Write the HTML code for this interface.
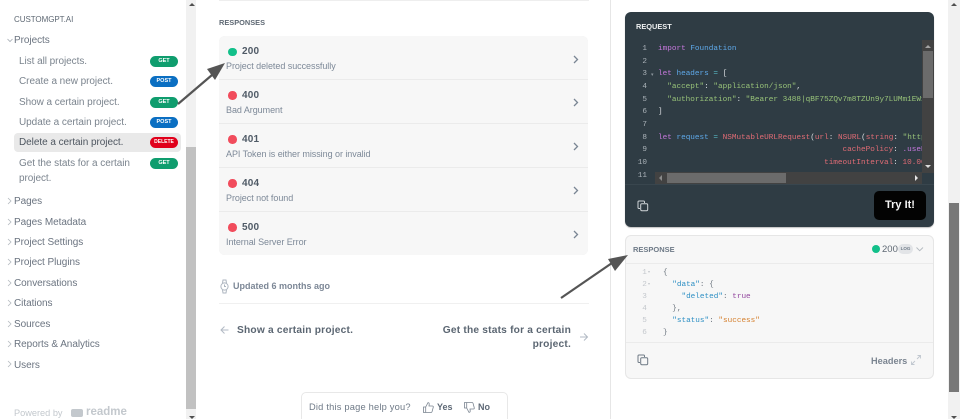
<!DOCTYPE html>
<html><head><meta charset="utf-8"><style>
html,body{margin:0;padding:0;background:#fff;width:960px;height:419px;overflow:hidden}
#w{width:960px;height:419px;position:relative;overflow:hidden;font-family:"Liberation Sans",sans-serif;filter:blur(.3px);background:#fff}
.a{position:absolute;white-space:nowrap}
.nav{font-size:10px;color:#6b7480;letter-spacing:-.05px;line-height:14px}
.sub{left:19px;color:#7b848e}
.top{left:14px}
.b{position:absolute;left:150px;width:28px;height:11px;border-radius:6px;color:#fff;font-size:5.5px;font-weight:bold;line-height:11px;text-align:center}
.g{background:#0f9d6e}.p{background:#0b6fc2}.r{background:#e0001b}
.row{position:absolute;left:219px;width:369px;height:43px;background:#f7f7f7;border-bottom:1px solid #ebebeb}
.dot{position:absolute;left:9px;top:11px;width:8.500px;height:8.500px;border-radius:50%;background:#f14c5c}
.code{position:absolute;left:23px;top:9.5px;font-size:10px;font-weight:bold;color:#4f5a66;letter-spacing:.2px;line-height:12px}
.desc{position:absolute;left:7px;top:24px;font-size:9px;color:#7d8998;letter-spacing:-.05px;line-height:12px;white-space:nowrap}
.m{font-family:"Liberation Mono",monospace;font-size:7.7px;line-height:12.65px;white-space:pre;position:absolute}
svg{position:absolute;overflow:visible}
</style></head><body><div id="w">

<div class="a" style="left:14px;top:13px;font-size:8px;color:#5f6974;letter-spacing:-.05px;line-height:14px">CUSTOMGPT.AI</div>
<svg style="left:7px;top:38px" width="6" height="6"><path d="M0.500 1 L3 3.500 L5.500 1" fill="none" stroke="#a4abb3" stroke-width=".8"/></svg>
<div class="a nav top" style="top:34px">Projects</div>
<div class="a nav sub" style="top:55px">List all projects.</div>
<div class="a nav sub" style="top:75px">Create a new project.</div>
<div class="a nav sub" style="top:96px">Show a certain project.</div>
<div class="a nav sub" style="top:116px">Update a certain project.</div>
<div class="a" style="left:14px;top:133px;width:167px;height:19px;background:#e9e9e9;border-radius:4px"></div>
<div class="a nav" style="left:19px;top:136px;color:#4e5660">Delete a certain project.</div>
<div class="a nav sub" style="top:157px">Get the stats for a certain</div>
<div class="a nav sub" style="top:172px">project.</div>
<div class="b g" style="top:55.5px">GET</div>
<div class="b p" style="top:76px">POST</div>
<div class="b g" style="top:96.5px">GET</div>
<div class="b p" style="top:116.5px">POST</div>
<div class="b r" style="top:137px;font-size:5px">DELETE</div>
<div class="b g" style="top:157.5px">GET</div>

<div class="a nav top" style="top:195px">Pages</div>
<div class="a nav top" style="top:216px">Pages Metadata</div>
<div class="a nav top" style="top:236px">Project Settings</div>
<div class="a nav top" style="top:256px">Project Plugins</div>
<div class="a nav top" style="top:277px">Conversations</div>
<div class="a nav top" style="top:297px">Citations</div>
<div class="a nav top" style="top:318px">Sources</div>
<div class="a nav top" style="top:338px">Reports &amp; Analytics</div>
<div class="a nav top" style="top:359px">Users</div>
<svg style="left:7px;top:198px" width="6" height="180" fill="none" stroke="#b4bac0" stroke-width=".8">
<path d="M1 0 L4 3 L1 6M1 21 L4 24 L1 27M1 41 L4 44 L1 47M1 61 L4 64 L1 67M1 82 L4 85 L1 88M1 102 L4 105 L1 108M1 123 L4 126 L1 129M1 143 L4 146 L1 149M1 163 L4 166 L1 169"/></svg>
<div class="a" style="left:14px;top:406px;font-size:9.2px;color:#c3c8cd;line-height:14px">Powered by</div>
<div class="a" style="left:71px;top:409px;width:12px;height:8px;background:#c3c8cd;border-radius:2px"></div>
<div class="a" style="left:86px;top:405px;font-size:11.5px;font-weight:bold;color:#c3c8cd;line-height:14px">readme</div>

<div class="a" style="left:186px;top:0;width:10px;height:419px;background:#f1f1f1"></div>
<div class="a" style="left:186px;top:147px;width:10px;height:262px;background:#c1c1c1"></div>
<div class="a" style="left:188.5px;top:3px;border:3px solid transparent;border-top:0;border-bottom:3px solid #505050"></div>
<div class="a" style="left:188.5px;top:416px;border:3px solid transparent;border-bottom:0;border-top:3px solid #505050"></div>

<div class="a" style="left:219px;top:0;width:370px;height:1px;background:#eeeeee"></div>
<div class="a" style="left:219px;top:17px;font-size:7.4px;color:#5f6974;font-weight:bold;line-height:12px">RESPONSES</div>

<div class="a" style="left:219px;top:36px;width:369px;height:219px;border-radius:6px;overflow:hidden;box-shadow:inset 0 0 0 1px #e8e8e8;background:#f7f7f7">
  <div class="row" style="left:0;top:0"><span class="dot" style="background:#12c08a;top:11.5px"></span><span class="code">200</span><span class="desc">Project deleted successfully</span></div>
  <div class="row" style="left:0;top:44px"><span class="dot"></span><span class="code">400</span><span class="desc">Bad Argument</span></div>
  <div class="row" style="left:0;top:88px"><span class="dot"></span><span class="code">401</span><span class="desc">API Token is either missing or invalid</span></div>
  <div class="row" style="left:0;top:132px"><span class="dot"></span><span class="code">404</span><span class="desc">Project not found</span></div>
  <div class="row" style="left:0;top:176px;border-bottom:0"><span class="dot"></span><span class="code">500</span><span class="desc">Internal Server Error</span></div>
</div>
<svg style="left:573px;top:54.500px" width="6" height="190" fill="none" stroke="#7a8694" stroke-width="1.3">
<path d="M1 1 L4.500 4.500 L1 8M1 44 L4.500 47.500 L1 51M1 88 L4.500 91.500 L1 95M1 132 L4.500 135.500 L1 139M1 176 L4.500 179.500 L1 183"/></svg>

<svg style="left:220px;top:279px" width="9" height="15" fill="none" stroke="#aeb6c0" stroke-width="1"><circle cx="4.500" cy="7.500" r="3.600"/><path d="M2.500 4 L3 1 H6 L6.500 4M2.500 11 L3 14 H6 L6.500 11M4.500 5.500 V7.500 H6"/></svg>
<div class="a" style="left:233px;top:280px;font-size:9px;font-weight:bold;color:#7c8796;line-height:13px">Updated 6 months ago</div>
<div class="a" style="left:219px;top:303px;width:370px;height:1px;background:#f0f0f0"></div>
<svg style="left:220px;top:325px" width="10" height="10" fill="none" stroke="#b2bac4" stroke-width="1"><path d="M8.500 5 H1 M4.500 1.500 L1 5 L4.500 8.500"/></svg>
<div class="a" style="left:237px;top:324px;font-size:10.2px;font-weight:bold;color:#5b6672;letter-spacing:.2px;line-height:13.5px">Show a certain project.</div>
<div class="a" style="left:431px;top:324px;width:140px;text-align:right;font-size:10.2px;font-weight:bold;color:#5b6672;letter-spacing:.2px;line-height:13.5px;white-space:normal">Get the stats for a certain project.</div>
<svg style="left:579px;top:332px" width="10" height="10" fill="none" stroke="#b2bac4" stroke-width="1"><path d="M1 5 H8.500 M5 1.500 L8.500 5 L5 8.500"/></svg>

<div class="a" style="left:301px;top:392px;width:205px;height:40px;border:1px solid #e8e8e8;border-radius:5px;background:#fff"></div>
<div class="a" style="left:309px;top:401px;font-size:9.3px;color:#6f7a87;letter-spacing:.2px;line-height:13px">Did this page help you?</div>
<svg style="left:423px;top:402px" width="11" height="11" fill="none" stroke="#7a8490" stroke-width=".8"><path d="M.5 5 H2.700 V10.500 H.5Z M2.700 5 L5 .6 Q6.300 .6 6.200 2.200 L6 4 H9.500 Q10.600 4.200 10.200 5.500 L9 9.800 Q8.800 10.500 8 10.500 H2.700"/></svg>
<div class="a" style="left:437px;top:401px;font-size:9px;font-weight:bold;color:#5e6976;line-height:13px">Yes</div>
<svg style="left:464px;top:402px" width="11" height="11" fill="none" stroke="#7a8490" stroke-width=".8"><path d="M.5 .5 H2.700 V6 H.5Z M2.700 6 L5 10.400 Q6.300 10.400 6.200 8.800 L6 7 H9.500 Q10.600 6.800 10.200 5.500 L9 1.200 Q8.800 .5 8 .5 H2.700"/></svg>
<div class="a" style="left:478px;top:401px;font-size:9px;font-weight:bold;color:#5e6976;line-height:13px">No</div>

<div class="a" style="left:610px;top:0;width:1px;height:419px;background:#e6e6e6"></div>

<!-- Request panel -->
<div class="a" style="left:625px;top:12px;width:309px;height:215px;background:#2f3c44;border-radius:6px;box-shadow:0 1px 1px rgba(0,0,0,.25)"></div>
<div class="a" style="left:636px;top:21px;font-size:7.4px;font-weight:bold;color:#eef0f1;line-height:12px">REQUEST</div>
<div class="a" style="left:658px;top:43px;width:264px;height:129px;overflow:hidden">
<div class="m" style="left:0;top:0;color:#d8dde0"><span style="color:#c678dd">import</span> <span style="color:#5ea8e8">Foundation</span>

<span style="color:#c678dd">let</span> <span style="color:#5ea8e8">headers</span> <span style="color:#56b6c2">=</span> [
  <span style="color:#98c379">"accept"</span>: <span style="color:#98c379">"application/json"</span>,
  <span style="color:#98c379">"authorization"</span>: <span style="color:#98c379">"Bearer 3488|qBF75ZQv7m8TZUn9y7LUMm1EWxxxx"</span>
]

<span style="color:#c678dd">let</span> <span style="color:#5ea8e8">request</span> <span style="color:#56b6c2">=</span> <span style="color:#e06c75">NSMutableURLRequest</span>(<span style="color:#e06c75">url</span>: <span style="color:#e06c75">NSURL</span>(<span style="color:#e06c75">string</span>: <span style="color:#98c379">"https://app</span>
                                        <span style="color:#e06c75">cachePolicy</span>: <span style="color:#c678dd">.useProtocol</span>
                                    <span style="color:#e06c75">timeoutInterval</span>: <span style="color:#e06c75">10.000</span></div>
</div>
<div class="m" style="left:632px;top:43px;width:15px;text-align:right;color:#aab2b8">1
2
3
4
5
6
7
8
9
10
11</div>
<div class="a" style="left:651px;top:72px;font-size:5px;color:#8b959c;line-height:6px">▾</div>
<div class="a" style="left:922px;top:40px;width:12px;height:133px;background:#424242"></div>
<div class="a" style="left:923px;top:51px;width:10px;height:47px;background:#6b6b6b"></div>
<div class="a" style="left:925px;top:45px;border:3px solid transparent;border-top:0;border-bottom:3px solid #a3a3a3"></div>
<div class="a" style="left:925px;top:165px;border:3px solid transparent;border-bottom:0;border-top:3px solid #dcdcdc"></div>
<div class="a" style="left:655px;top:172px;width:267px;height:12px;background:#424242"></div>
<div class="a" style="left:667px;top:173px;width:119px;height:10px;background:#6b6b6b"></div>
<div class="a" style="left:659px;top:175px;border:3px solid transparent;border-left:0;border-right:3px solid #8a8a8a"></div>
<div class="a" style="left:915px;top:175px;border:3px solid transparent;border-right:0;border-left:3px solid #e6e6e6"></div>
<div class="a" style="left:625px;top:184px;width:309px;height:1px;background:#39464e"></div>
<svg style="left:637px;top:200px" width="12" height="12" fill="none" stroke="#cfd4d7" stroke-width="1"><path d="M3 8.500 H2 Q1 8.500 1 7.500 V2 Q1 1 2 1 H6.500 Q7.500 1 7.500 2 V3"/><rect x="3.700" y="3.700" width="7" height="7" rx="1.200"/></svg>
<div class="a" style="left:874px;top:191px;width:52px;height:29px;background:#030303;border-radius:5px;color:#f4f4f4;font-size:11px;font-weight:bold;line-height:29px;text-align:center">Try It!</div>

<!-- Response panel -->
<div class="a" style="left:625px;top:235px;width:307px;height:142px;background:#f7f7f7;border:1px solid #e6e6e6;border-radius:6px"></div>
<div class="a" style="left:626px;top:263px;width:307px;height:1px;background:#ebebeb"></div>
<div class="a" style="left:626px;top:342px;width:307px;height:1px;background:#ebebeb"></div>
<div class="a" style="left:633px;top:244px;font-size:7.5px;font-weight:bold;color:#6e7a87;line-height:12px">RESPONSE</div>
<div class="a" style="left:872px;top:245px;width:8px;height:8px;border-radius:50%;background:#12c08a"></div>
<div class="a" style="left:882px;top:243px;font-size:9.5px;color:#5f6974;line-height:13px">200</div>
<div class="a" style="left:898px;top:244px;width:15px;height:10px;border-radius:5px;background:#e2e4e7;color:#6e7a87;font-size:4.500px;font-weight:bold;line-height:10px;text-align:center">LOG</div>
<svg style="left:916px;top:247px" width="8" height="5" fill="none" stroke="#b4bac0" stroke-width=".9"><path d="M.5 .5 L3.700 3.700 L7 .5"/></svg>
<div class="m" style="left:640px;top:267px;width:9px;text-align:center;color:#c3c7cc;line-height:12.1px">1
2
3
4
5
6</div>
<div class="a" style="left:648px;top:269px;font-size:4px;color:#c3c7cc;line-height:6px">▾</div>
<div class="a" style="left:648px;top:281px;font-size:4px;color:#c3c7cc;line-height:6px">▾</div>
<div class="m" style="left:663px;top:267px;color:#6e7780;line-height:12.1px">{
  <span style="color:#2d8fc4">"data"</span>: {
    <span style="color:#2d8fc4">"deleted"</span>: <span style="color:#92469e">true</span>
  },
  <span style="color:#2d8fc4">"status"</span>: <span style="color:#d5802f">"success"</span>
}</div>
<svg style="left:637px;top:354px" width="12" height="12" fill="none" stroke="#6f7a85" stroke-width="1"><path d="M3 8.500 H2 Q1 8.500 1 7.500 V2 Q1 1 2 1 H6.500 Q7.500 1 7.500 2 V3"/><rect x="3.700" y="3.700" width="7" height="7" rx="1.200"/></svg>
<div class="a" style="left:871px;top:355px;font-size:9.2px;font-weight:bold;color:#7b8591;line-height:13px">Headers</div>
<svg style="left:911px;top:355px" width="10" height="10" fill="none" stroke="#c0c7cf" stroke-width=".9"><path d="M6 4 L9.500 .5 M6.500 .5 H9.500 V3.500 M4 6 L.5 9.500 M.5 6.500 V9.500 H3.500"/></svg>

<!-- Page scrollbar -->
<div class="a" style="left:948px;top:0;width:12px;height:419px;background:#f1f1f1"></div>
<div class="a" style="left:949px;top:203px;width:10px;height:189px;background:#787878"></div>
<div class="a" style="left:951px;top:3px;border:3px solid transparent;border-top:0;border-bottom:3px solid #505050"></div>
<div class="a" style="left:951px;top:416px;border:3px solid transparent;border-bottom:0;border-top:3px solid #505050"></div>

<!-- Annotation arrows -->
<svg style="left:0;top:0" width="960" height="419"><g fill="#555" stroke="#555" stroke-width="2.200">
<path d="M178 104 L212 75" fill="none"/>
<path d="M561 298 L612 263" fill="none"/>
<path d="M225 63 L207 69 L215 80Z" stroke="none"/>
<path d="M628 255 L608 259 L615 271Z" stroke="none"/>
</g></svg>
</div></body></html>
